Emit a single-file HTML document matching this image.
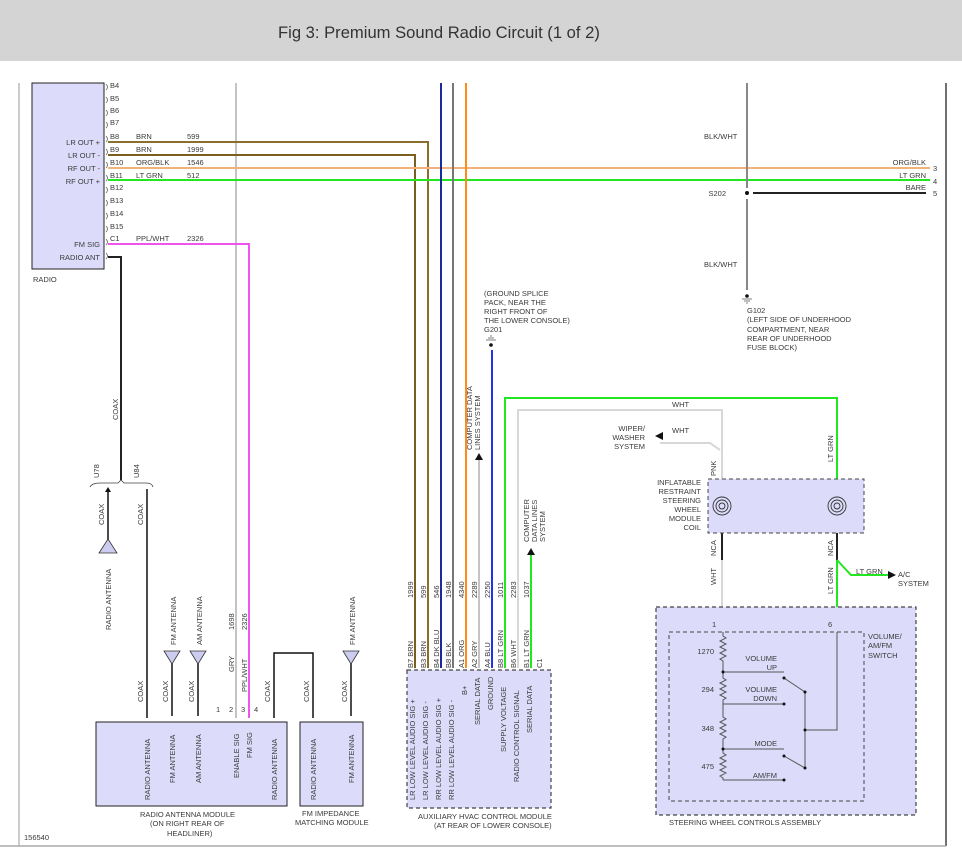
<!DOCTYPE html>
<html><head><meta charset="utf-8"><style>
html,body{margin:0;padding:0;background:#fff;}
svg{display:block;}
text{font-family:"Liberation Sans",sans-serif;font-size:7.5px;fill:#3a3a3a;}
.t{font-size:16.6px;fill:#333;}
</style></head><body>
<svg width="962" height="865" viewBox="0 0 962 865" xmlns="http://www.w3.org/2000/svg">
<rect x="0" y="0" width="962" height="61" fill="#d4d4d4"/>
<text class="t" x="278" y="38">Fig 3: Premium Sound Radio Circuit (1 of 2)</text>
<line x1="19" y1="83" x2="19" y2="846" stroke="#aaa" stroke-width="1.2"/>
<line x1="946" y1="83" x2="946" y2="846" stroke="#111" stroke-width="1.2"/>
<line x1="0" y1="846" x2="946" y2="846" stroke="#aaa" stroke-width="1.5"/>
<text x="24" y="840">156540</text>

<rect x="32" y="83" width="72" height="186" fill="#dcdcfa" stroke="#222" stroke-width="1"/>
<text x="33" y="282">RADIO</text>
<g text-anchor="end">
<text x="100" y="145">LR OUT +</text><text x="100" y="158">LR OUT -</text>
<text x="100" y="171">RF OUT -</text><text x="100" y="184">RF OUT +</text>
<text x="100" y="247">FM SIG</text><text x="100" y="260">RADIO ANT</text>
</g>
<g>
<text x="110" y="88">B4</text><text x="110" y="101">B5</text><text x="110" y="113">B6</text><text x="110" y="125">B7</text>
<text x="110" y="139">B8</text><text x="110" y="152">B9</text><text x="110" y="165">B10</text><text x="110" y="178">B11</text>
<text x="110" y="190">B12</text><text x="110" y="203">B13</text><text x="110" y="216">B14</text><text x="110" y="229">B15</text><text x="110" y="241">C1</text>
<text x="136" y="139">BRN</text><text x="187" y="139">599</text>
<text x="136" y="152">BRN</text><text x="187" y="152">1999</text>
<text x="136" y="165">ORG/BLK</text><text x="187" y="165">1546</text>
<text x="136" y="178">LT GRN</text><text x="187" y="178">512</text>
<text x="136" y="241">PPL/WHT</text><text x="187" y="241">2326</text>
</g>
<g fill="none" stroke="#666" stroke-width="0.8">
<path d="M106 84 q3 3 0 6 M106 97 q3 3 0 6 M106 110 q3 3 0 6 M106 122 q3 3 0 6 M106 136 q3 3 0 6 M106 149 q3 3 0 6 M106 162 q3 3 0 6 M106 175 q3 3 0 6 M106 187 q3 3 0 6 M106 200 q3 3 0 6 M106 213 q3 3 0 6 M106 226 q3 3 0 6 M106 239 q3 3 0 6 M106 253 q3 3 0 6"/>
</g>

<g fill="none" stroke-width="2">
<line x1="236" y1="83" x2="236" y2="718" stroke="#c4c4c4"/>
<path d="M108 142 H428 V668" stroke="#8a6e2e"/>
<path d="M108 155 H415 V668" stroke="#7a5e20"/>
<line x1="108" y1="168" x2="930" y2="168" stroke="#f2b27a"/>
<line x1="108" y1="180" x2="930" y2="180" stroke="#22e622"/>
<path d="M108 244 H249 V718" stroke="#ee55ee"/>
<path d="M108 257 H121 V480" stroke="#222"/>
<line x1="441" y1="83" x2="441" y2="668" stroke="#1a2a9a"/>
<line x1="453" y1="83" x2="453" y2="668" stroke="#777"/>
<line x1="466" y1="83" x2="466" y2="668" stroke="#ff8c1a"/>
<line x1="479" y1="460" x2="479" y2="668" stroke="#c4c4c4"/>
<line x1="492" y1="350" x2="492" y2="668" stroke="#2233ee"/>
<path d="M505 668 V398 H837 V479" stroke="#22e622"/>
<path d="M518 668 V410 H722 V479" stroke="#d8d8d8"/>
<path d="M720 450 L710 443 H660" stroke="#d8d8d8"/>
<line x1="531" y1="555" x2="531" y2="668" stroke="#22e622"/>
<line x1="747" y1="83" x2="747" y2="188" stroke="#888"/>
<line x1="747" y1="199" x2="747" y2="290" stroke="#888"/>
<line x1="753" y1="193" x2="926" y2="193" stroke="#222"/>
<line x1="722" y1="480" x2="722" y2="525" stroke="#f29aaa"/>
<line x1="722" y1="533" x2="722" y2="632" stroke="#d8d8d8"/>
<line x1="722" y1="533" x2="722" y2="560" stroke="#222"/>
<line x1="837" y1="533" x2="837" y2="560" stroke="#222"/>
<path d="M837 560 V632" stroke="#22e622"/>
<path d="M837 560 L851 575 H888" stroke="#22e622"/>
</g>
<polygon points="655,436 663,432 663,440" fill="#111"/>
<polygon points="896,575 888,571 888,579" fill="#111"/>
<polygon points="479,453 475,460 483,460" fill="#111"/>
<polygon points="531,548 527,555 535,555" fill="#111"/>
<circle cx="747" cy="193" r="2" fill="#111"/>
<text x="726" y="196" text-anchor="end">S202</text>
<text x="704" y="139">BLK/WHT</text><text x="704" y="267">BLK/WHT</text>
<g text-anchor="end"><text x="926" y="165">ORG/BLK</text><text x="926" y="178">LT GRN</text><text x="926" y="190">BARE</text></g>
<text x="933" y="171">3</text><text x="933" y="184">4</text><text x="933" y="196">5</text>
<circle cx="747" cy="296" r="1.8" fill="#111"/>
<path d="M742 299 H752 M744 301 H750 M746 303 H748" stroke="#555" stroke-width="0.8"/>
<text x="747" y="313">G102</text><text x="747" y="322">(LEFT SIDE OF UNDERHOOD</text><text x="747" y="332">COMPARTMENT, NEAR</text><text x="747" y="341">REAR OF UNDERHOOD</text><text x="747" y="350">FUSE BLOCK)</text>
<text x="484" y="296">(GROUND SPLICE</text><text x="484" y="305">PACK, NEAR THE</text><text x="484" y="314">RIGHT FRONT OF</text><text x="484" y="323">THE LOWER CONSOLE)</text><text x="484" y="332">G201</text>
<circle cx="491" cy="345" r="1.8" fill="#111"/>
<path d="M486 340 H496 M488 338 H494 M490 336 H492" stroke="#555" stroke-width="0.8"/>
<g>
<text transform="translate(472,450) rotate(-90)">COMPUTER DATA</text>
<text transform="translate(480,450) rotate(-90)">LINES SYSTEM</text>
<text transform="translate(529,542) rotate(-90)">COMPUTER</text>
<text transform="translate(537,542) rotate(-90)">DATA LINES</text>
<text transform="translate(545,542) rotate(-90)">SYSTEM</text>
<text transform="translate(118,420) rotate(-90)">COAX</text>
</g>
<text x="672" y="407">WHT</text><text x="672" y="433">WHT</text>
<g text-anchor="end"><text x="645" y="431">WIPER/</text><text x="645" y="440">WASHER</text><text x="645" y="449">SYSTEM</text></g>
<text x="856" y="574">LT GRN</text><text x="898" y="577">A/C</text><text x="898" y="586">SYSTEM</text>

<rect x="708" y="479" width="156" height="54" fill="#dcdcfa" stroke="#444" stroke-dasharray="4,3"/>
<g fill="none" stroke="#333" stroke-width="0.9">
<circle cx="722" cy="506" r="9"/><circle cx="722" cy="506" r="6"/><circle cx="722" cy="506" r="3"/>
<circle cx="837" cy="506" r="9"/><circle cx="837" cy="506" r="6"/><circle cx="837" cy="506" r="3"/>
</g>
<g text-anchor="end"><text x="701" y="485">INFLATABLE</text><text x="701" y="494">RESTRAINT</text><text x="701" y="503">STEERING</text><text x="701" y="512">WHEEL</text><text x="701" y="521">MODULE</text><text x="701" y="530">COIL</text></g>
<g>
<text transform="translate(716,476) rotate(-90)">PNK</text>
<text transform="translate(833,462) rotate(-90)">LT GRN</text>
<text transform="translate(716,556) rotate(-90)">NCA</text>
<text transform="translate(833,556) rotate(-90)">NCA</text>
<text transform="translate(716,585) rotate(-90)">WHT</text>
<text transform="translate(833,594) rotate(-90)">LT GRN</text>
</g>

<rect x="656" y="607" width="260" height="208" fill="#dcdcfa" stroke="#444" stroke-dasharray="4,3" stroke-width="1.2"/>
<rect x="669" y="632" width="195" height="169" fill="none" stroke="#444" stroke-dasharray="4,3"/>
<text x="712" y="627">1</text><text x="828" y="627">6</text>
<text x="868" y="639">VOLUME/</text><text x="868" y="648">AM/FM</text><text x="868" y="658">SWITCH</text>
<text x="669" y="825">STEERING WHEEL CONTROLS ASSEMBLY</text>
<g fill="none" stroke="#555" stroke-width="1">
<path d="M723 632 V636 l3 2 -6 3 6 3 -6 3 6 3 -6 3 6 3 -6 3 3 2 V678 l3 2 -6 3 6 3 -6 3 6 3 -6 3 6 3 -3 2 V717 l3 2 -6 3 6 3 -6 3 6 3 -6 3 6 3 -3 2 V753 l3 2 -6 3 6 3 -6 3 6 3 -6 3 6 3 -6 3 3 2 V780"/>
<path d="M723 672 H784 M723 704 H784 M723 749 H784 M723 780 H784"/>
<path d="M784 678 L805 692 V768 L784 756 M805 730 H837 V632"/>
</g>
<g fill="#111"><circle cx="723" cy="672" r="1.5"/><circle cx="723" cy="749" r="1.5"/><circle cx="784" cy="704" r="1.5"/><circle cx="784" cy="780" r="1.5"/><circle cx="784" cy="678" r="1.5"/><circle cx="784" cy="756" r="1.5"/><circle cx="805" cy="692" r="1.5"/><circle cx="805" cy="768" r="1.5"/><circle cx="805" cy="730" r="1.5"/></g>
<g text-anchor="end"><text x="714" y="654">1270</text><text x="714" y="692">294</text><text x="714" y="731">348</text><text x="714" y="769">475</text>
<text x="777" y="661">VOLUME</text><text x="777" y="670">UP</text><text x="777" y="692">VOLUME</text><text x="777" y="701">DOWN</text><text x="777" y="746">MODE</text><text x="777" y="778">AM/FM</text></g>

<rect x="407" y="670" width="144" height="138" fill="#dcdcfa" stroke="#444" stroke-dasharray="4,3" stroke-width="1.2"/>
<text x="418" y="819">AUXILIARY HVAC CONTROL MODULE</text><text x="434" y="828">(AT REAR OF LOWER CONSOLE)</text>
<g>
<text transform="translate(413,668) rotate(-90)">B7  BRN</text><text transform="translate(413,598) rotate(-90)">1999</text>
<text transform="translate(426,668) rotate(-90)">B3  BRN</text><text transform="translate(426,598) rotate(-90)">599</text>
<text transform="translate(439,668) rotate(-90)">B4  DK BLU</text><text transform="translate(439,598) rotate(-90)">546</text>
<text transform="translate(451,668) rotate(-90)">B8  BLK</text><text transform="translate(451,598) rotate(-90)">1948</text>
<text transform="translate(464,668) rotate(-90)">A1  ORG</text><text transform="translate(464,598) rotate(-90)">4340</text>
<text transform="translate(477,668) rotate(-90)">A2  GRY</text><text transform="translate(477,598) rotate(-90)">2289</text>
<text transform="translate(490,668) rotate(-90)">A4  BLU</text><text transform="translate(490,598) rotate(-90)">2250</text>
<text transform="translate(503,668) rotate(-90)">B8  LT GRN</text><text transform="translate(503,598) rotate(-90)">1011</text>
<text transform="translate(516,668) rotate(-90)">B6    WHT</text><text transform="translate(516,598) rotate(-90)">2283</text>
<text transform="translate(529,668) rotate(-90)">B1  LT GRN</text><text transform="translate(529,598) rotate(-90)">1037</text>
<text transform="translate(542,668) rotate(-90)">C1</text>
<text transform="translate(415,800) rotate(-90)">LR LOW LEVEL AUDIO SIG +</text>
<text transform="translate(428,800) rotate(-90)">LR LOW LEVEL AUDIO SIG -</text>
<text transform="translate(441,800) rotate(-90)">RR LOW LEVEL AUDIO SIG +</text>
<text transform="translate(454,800) rotate(-90)">RR LOW LEVEL AUDIO SIG -</text>
<text transform="translate(467,695) rotate(-90)">B+</text>
<text transform="translate(480,725) rotate(-90)">SERIAL DATA</text>
<text transform="translate(493,710) rotate(-90)">GROUND</text>
<text transform="translate(506,752) rotate(-90)">SUPPLY VOLTAGE</text>
<text transform="translate(519,782) rotate(-90)">RADIO CONTROL SIGNAL</text>
<text transform="translate(532,733) rotate(-90)">SERIAL DATA</text>
</g>

<path d="M90 487 Q92 483 100 483 H118 L121 480 L124 483 H146 Q152 483 153 487" fill="none" stroke="#444" stroke-width="0.8"/>
<text transform="translate(99,478) rotate(-90)">U78</text><text transform="translate(139,478) rotate(-90)">U84</text>
<g stroke="#111" stroke-width="1.5" fill="none">
<line x1="108" y1="489" x2="108" y2="553"/>
<line x1="147" y1="489" x2="147" y2="718"/>
<line x1="172" y1="651" x2="172" y2="716"/>
<line x1="198" y1="651" x2="198" y2="716"/>
<line x1="351" y1="651" x2="351" y2="716"/>
<path d="M274 718 V653 H313 V718"/>
</g>
<g fill="#ccccf0" stroke="#333" stroke-width="0.8">
<polygon points="108,539 99,553 117,553"/>
<polygon points="164,651 180,651 172,664"/>
<polygon points="190,651 206,651 198,664"/>
<polygon points="343,651 359,651 351,664"/>
</g>
<polygon points="108,487 105,492 111,492" fill="#111"/>
<g>
<text transform="translate(104,525) rotate(-90)">COAX</text><text transform="translate(143,525) rotate(-90)">COAX</text>
<text transform="translate(111,630) rotate(-90)">RADIO ANTENNA</text>
<text transform="translate(176,645) rotate(-90)">FM ANTENNA</text>
<text transform="translate(202,645) rotate(-90)">AM ANTENNA</text>
<text transform="translate(355,645) rotate(-90)">FM ANTENNA</text>
<text transform="translate(234,630) rotate(-90)">1698</text><text transform="translate(234,672) rotate(-90)">GRY</text>
<text transform="translate(247,630) rotate(-90)">2326</text><text transform="translate(247,692) rotate(-90)">PPL/WHT</text>
<text transform="translate(143,702) rotate(-90)">COAX</text><text transform="translate(168,702) rotate(-90)">COAX</text>
<text transform="translate(194,702) rotate(-90)">COAX</text><text transform="translate(270,702) rotate(-90)">COAX</text>
<text transform="translate(309,702) rotate(-90)">COAX</text><text transform="translate(347,702) rotate(-90)">COAX</text>
</g>
<text x="216" y="712">1</text><text x="229" y="712">2</text><text x="241" y="712">3</text><text x="254" y="712">4</text>
<rect x="96" y="722" width="191" height="84" fill="#dcdcfa" stroke="#222"/>
<rect x="300" y="722" width="63" height="84" fill="#dcdcfa" stroke="#222"/>
<g>
<text transform="translate(150,800) rotate(-90)">RADIO ANTENNA</text>
<text transform="translate(175,783) rotate(-90)">FM ANTENNA</text>
<text transform="translate(201,783) rotate(-90)">AM ANTENNA</text>
<text transform="translate(239,778) rotate(-90)">ENABLE SIG</text>
<text transform="translate(252,758) rotate(-90)">FM SIG</text>
<text transform="translate(277,800) rotate(-90)">RADIO ANTENNA</text>
<text transform="translate(316,800) rotate(-90)">RADIO ANTENNA</text>
<text transform="translate(354,783) rotate(-90)">FM ANTENNA</text>
</g>
<text x="140" y="817">RADIO ANTENNA MODULE</text><text x="150" y="826">(ON RIGHT REAR OF</text><text x="167" y="836">HEADLINER)</text>
<text x="302" y="816">FM IMPEDANCE</text><text x="295" y="825">MATCHING MODULE</text>
</svg>
</body></html>
